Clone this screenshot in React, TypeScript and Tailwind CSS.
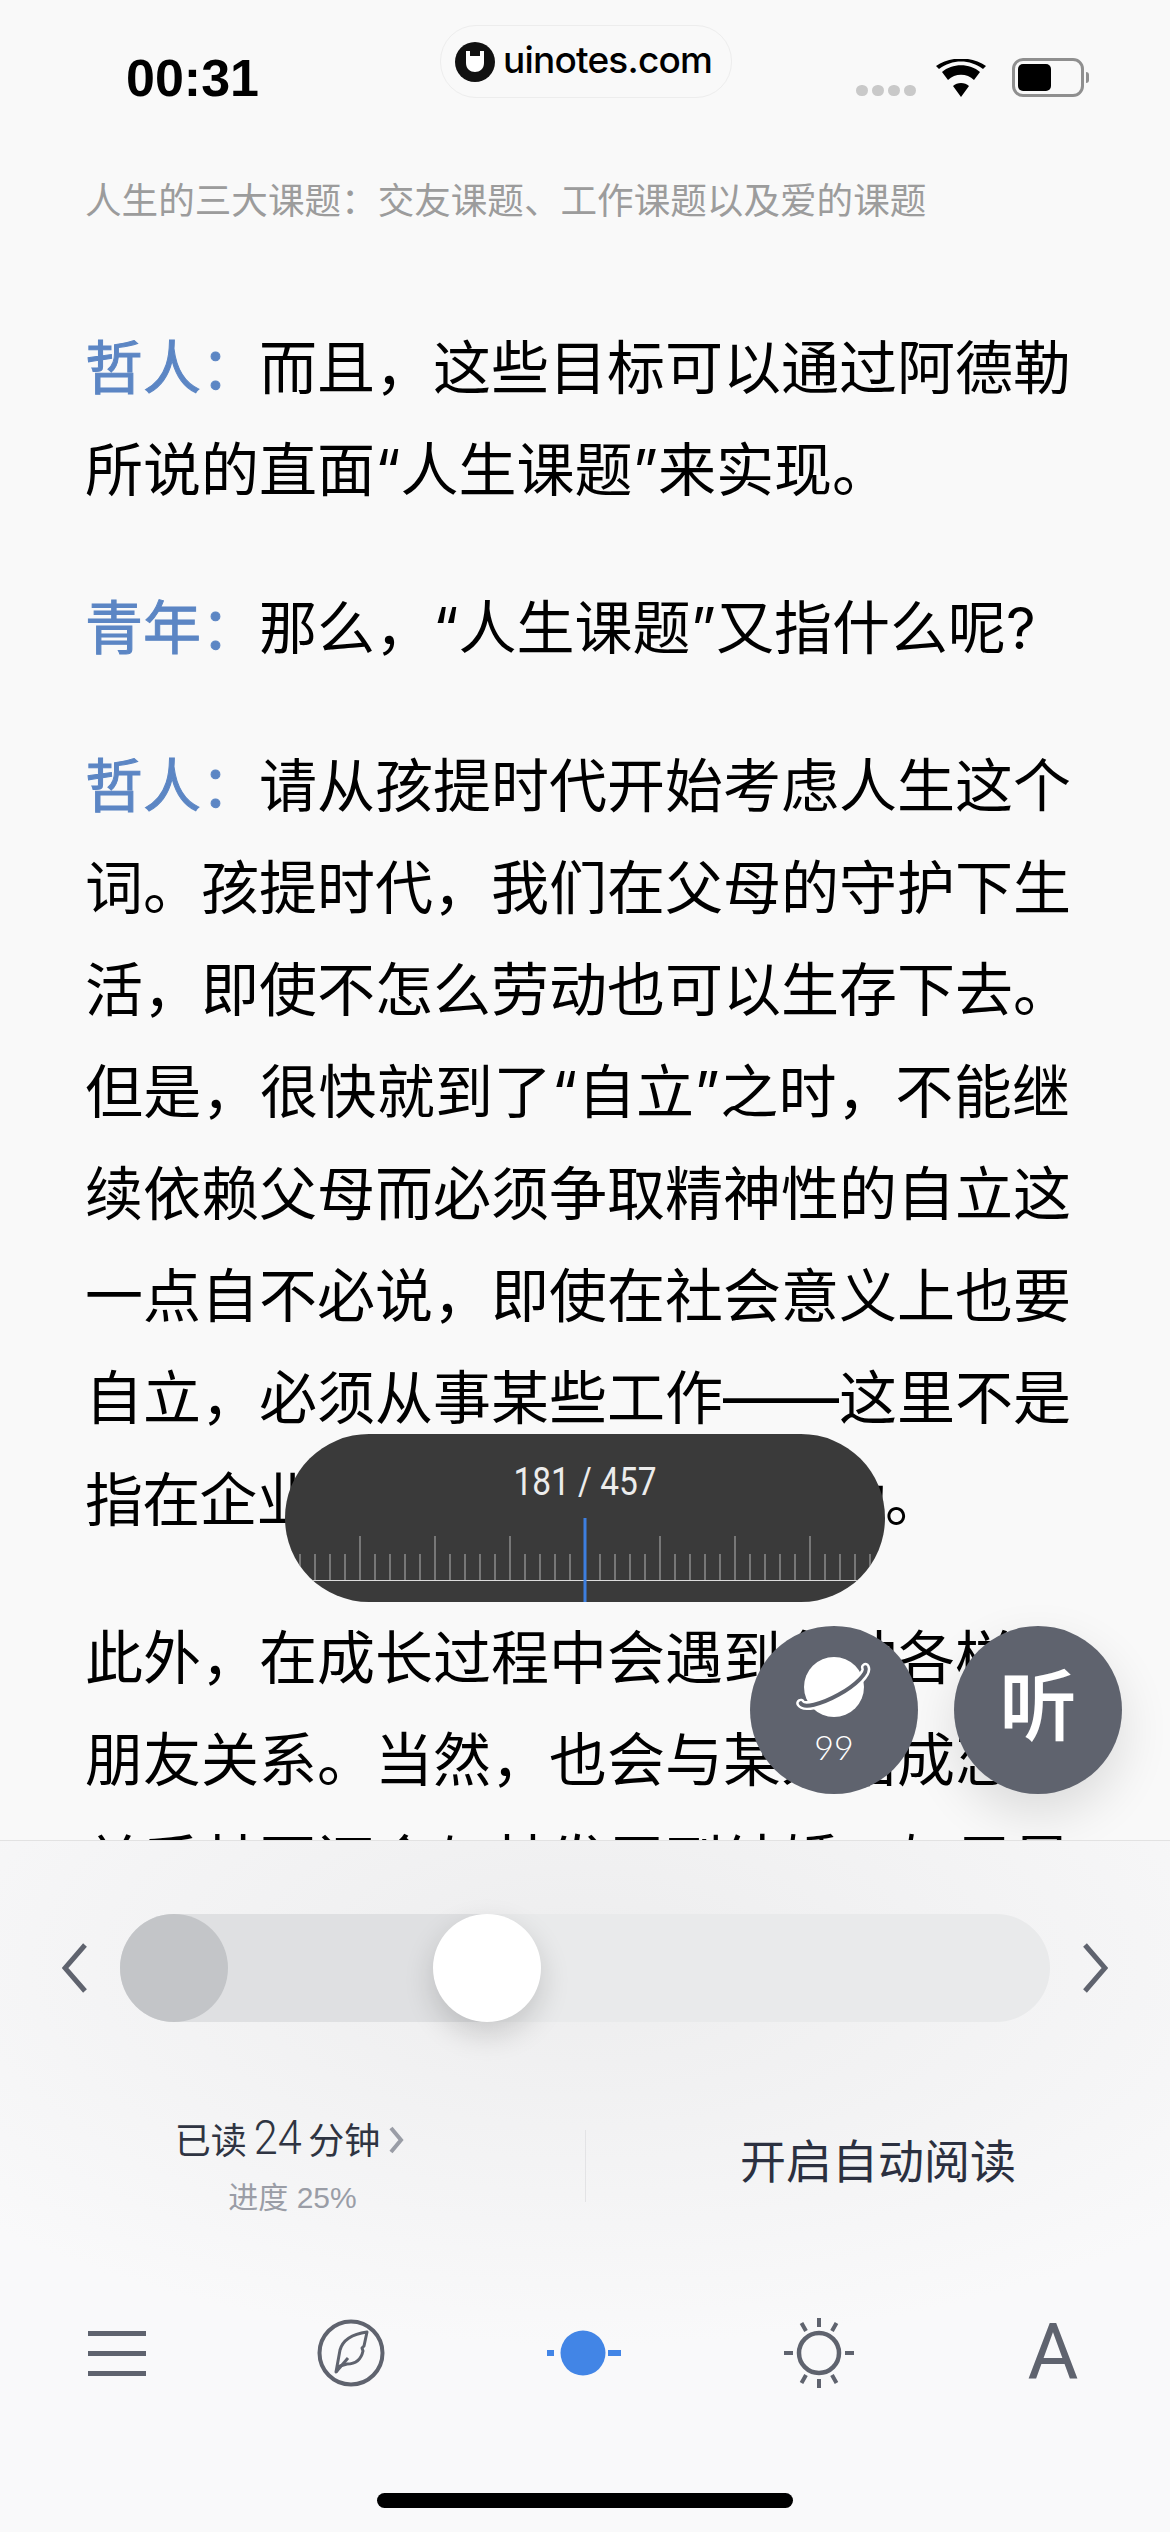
import React from "react";

const Line: React.FC<{ text: string; tag?: string; full?: boolean; tight?: boolean }> = ({ text, tag, full = true, tight }) => {
  return (
    <div
      className={
        (full ? "whitespace-nowrap text-justify [text-align-last:justify]" : "whitespace-nowrap") +
        (tight ? " tracking-[-0.85px]" : "")
      }
    >
      {tag && <span className="text-[#5c86c4] [-webkit-text-stroke:1px_#5c86c4]">{tag}</span>}
      {text}
    </div>
  );
};

const Ruler: React.FC = () => {
  const ticks = [];
  for (let k = -20; k <= 20; k++) {
    if (k === 0) continue;
    ticks.push(
      <rect key={k} x={300 + k * 15 - 0.5} y={k % 5 === 0 ? 102 : 120} width={1} height={k % 5 === 0 ? 44 : 26} fill="#b4b4b4" />
    );
  }
  return (
    <svg width="600" height="168" viewBox="0 0 600 168" className="absolute inset-0">
      {ticks}
      <rect x="0" y="146" width="600" height="1" fill="#dcdcdc" />
      <rect x="298.5" y="84" width="3" height="84" fill="#3d7fe0" />
    </svg>
  );
};

const PlanetIcon: React.FC = () => {
  return (
    <svg width="76" height="64" viewBox="0 0 76 64">
      <circle cx="38" cy="31" r="30" fill="#fff" />
      <g transform="rotate(-29 38 31)" fill="none" strokeLinecap="round">
        <path d="M1 29 A37 11 0 0 0 75 29" stroke="#fff" strokeWidth="9" />
        <path d="M1 29 A37 11 0 0 0 75 29" stroke="#5f636e" strokeWidth="4" />
      </g>
    </svg>
  );
};

const CompassIcon: React.FC = () => {
  return (
    <svg width="68" height="68" viewBox="0 0 68 68" fill="none" stroke="#5f636e">
      <circle cx="34" cy="34" r="31.5" strokeWidth="4" />
      <path d="M19 53 L23 31 C26 20 36 15 50 13 L47 27 L45 29 L46 32 C44 41 38 45 30 45 L23 47 Z" strokeWidth="3" strokeLinejoin="round" />
      <path d="M19 53 L31 39" strokeWidth="3" />
    </svg>
  );
};

const SunIcon: React.FC = () => {
  return (
    <svg width="72" height="72" viewBox="0 0 72 72" fill="none" stroke="#5f636e" strokeWidth="4">
      <circle cx="36" cy="36" r="20" strokeWidth="4.5" />
      <path d="M36 1 V10 M36 62 V71 M1 36 H10 M62 36 H71" />
      <path d="M18.5 6 L23 14 M53.5 6 L49 14 M18.5 66 L23 58 M53.5 66 L49 58" />
    </svg>
  );
};

const Chevron: React.FC<{ right?: boolean }> = ({ right }) => {
  return (
    <svg width="26" height="50" viewBox="0 0 26 50" fill="none" stroke="#5f636e" strokeWidth="5">
      <path d={right ? "M3 2 L23 25 L3 48" : "M23 2 L3 25 L23 48"} />
    </svg>
  );
};

const App: React.FC = () => {
  return (
    <div
      lang="zh-CN"
      className="relative flex flex-col h-[2532px] w-[1170px] overflow-hidden bg-[#f9f9f9] text-black font-['Liberation_Sans','Noto_Sans_CJK_SC',sans-serif]"
    >
      {/* status bar */}
      <div className="flex items-start justify-between h-[112px] shrink-0 pl-[126px] pr-[86px] pt-[49px]">
        <span className="text-[52px] leading-[58px] font-bold">00:31</span>
        <div className="flex items-center gap-[20px] pt-[9px]">
          <div className="flex gap-[4px] pt-[26px]">
            <i className="w-[12px] h-[11px] rounded-full bg-[#c9c9c9]" />
            <i className="w-[12px] h-[11px] rounded-full bg-[#c9c9c9]" />
            <i className="w-[12px] h-[11px] rounded-full bg-[#c9c9c9]" />
            <i className="w-[12px] h-[11px] rounded-full bg-[#c9c9c9]" />
          </div>
          <svg width="50" height="38" viewBox="0 0 50 38" className="mr-[6px]">
            <path d="M25 38 L17 27 C21 23 29 23 33 27 Z M12 21 L6 13 C16 4 34 4 44 13 L38 21 C31 14 19 14 12 21 Z M3 10 L0 7 C14 -3 36 -3 50 7 L47 10 C34 0 16 0 3 10 Z" fill="#000" />
          </svg>
          <div className="relative w-[72px] h-[39px] rounded-[11px] border-[3px] border-[#8f8f8f] p-[3px]">
            <div className="w-[33px] h-full rounded-[5px] bg-black" />
            <i className="absolute -right-[8px] top-[11px] w-[3px] h-[11px] rounded-r bg-[#8f8f8f]" />
          </div>
        </div>
      </div>

      {/* watermark */}
      <div className="absolute left-[440px] top-[25px] w-[292px] h-[73px] rounded-[36px] border border-[#ededed] flex items-center pl-[14px] gap-[8px]">
        <svg width="40" height="40" viewBox="0 0 40 40">
          <circle cx="20" cy="20" r="20" fill="#111" />
          <path d="M11 9 V21 C11 33 29 33 29 21 V9 H25 V14 H15 V9 Z" fill="#fff" />
        </svg>
        <span className="text-[37px] leading-none font-['Inter',sans-serif] font-medium tracking-[-0.8px] -mt-[4px]">uinotes.com</span>
      </div>

      {/* article */}
      <div className="flex-1 min-h-0 overflow-hidden pl-[85px] w-[1070px]">
        <div className="text-[36.6px] leading-[48px] text-[#9c9c9c] whitespace-nowrap mt-[66px]">
          人生的三大课题：交友课题、工作课题以及爱的课题
        </div>
        <div className="mt-[91px] text-[58px] leading-[102px] font-['Inter','Noto_Sans_CJK_SC',sans-serif]">
          <div className="mb-[56px]">
            <Line tag="哲人：" text="而且，这些目标可以通过阿德勒" />
            <Line full={false} text="所说的直面“人生课题”来实现。" />
          </div>
          <div className="mb-[56px]">
            <Line full={false} tag="青年：" text="那么，“人生课题”又指什么呢?" />
          </div>
          <div className="mb-[56px]">
            <Line tag="哲人：" text="请从孩提时代开始考虑人生这个" />
            <Line text="词。孩提时代，我们在父母的守护下生" />
            <Line text="活，即使不怎么劳动也可以生存下去。" />
            <Line text="但是，很快就到了“自立”之时，不能继" />
            <Line text="续依赖父母而必须争取精神性的自立这" />
            <Line text="一点自不必说，即使在社会意义上也要" />
            <Line text="自立，必须从事某些工作——这里不是" />
            <Line full={false} tight text="指在企业工作，而是广义的劳动。" />
          </div>
          <div>
            <Line text="此外，在成长过程中会遇到各种各样的" />
            <Line text="朋友关系。当然，也会与某人结成恋爱" />
            <Line text="关系甚至还会与其发展到结婚。如果是" />
          </div>
        </div>
      </div>

      {/* page bubble */}
      <div className="absolute left-[285px] top-[1434px] w-[600px] h-[168px] rounded-full bg-[#3a3a3a] overflow-hidden">
        <div className="relative text-center text-[#ececec] text-[38px] leading-[44px] pt-[26px] font-['Roboto',sans-serif] [transform:scaleX(0.88)]">
          181 / 457
        </div>
        <Ruler />
      </div>

      {/* floating buttons */}
      <div className="absolute left-[750px] top-[1626px] flex gap-[36px]">
        <div className="w-[168px] h-[168px] rounded-full bg-[#5f636e] flex flex-col items-center pt-[30px]">
          <PlanetIcon />
          <span className="text-white text-[34px] leading-[36px] mt-[9px] font-['Lato',sans-serif] font-light">99</span>
        </div>
        <div className="w-[168px] h-[168px] rounded-full bg-[#5f636e] flex items-center justify-center shadow-[0_20px_50px_rgba(0,0,0,0.12)]">
          <span className="text-white text-[76px] leading-none [-webkit-text-stroke:2px_#fff] -mt-[4px]">听</span>
        </div>
      </div>

      {/* bottom panel */}
      <div className="relative shrink-0 h-[692px] border-t border-[#e2e2e2] pt-[73px] bg-[radial-gradient(ellipse_70%_55%_at_50%_18%,#ededee_0%,#f4f4f5_60%,#f9f9fa_100%)]">
        <div className="flex items-center pl-[62px] gap-[32px]">
          <Chevron />
          <div className="relative w-[930px] h-[108px] rounded-full bg-[#e9eaeb]">
            <div className="absolute left-0 top-0 h-full w-[367px] rounded-l-full bg-[#dfe0e2]" />
            <div className="absolute left-0 top-0 w-[108px] h-[108px] rounded-full bg-[#c3c5c8]" />
            <div className="absolute left-[313px] top-0 w-[108px] h-[108px] rounded-full bg-white shadow-[0_12px_30px_rgba(0,0,0,0.16)]" />
          </div>
          <Chevron right />
        </div>

        <div className="mt-[108px] h-[72px] flex">
          <div className="w-[585px] flex flex-col items-center justify-center">
            <div className="flex items-baseline text-[36px] leading-[50px] text-[#2f3442] whitespace-nowrap -mt-[3px] -ml-[6px]">
              <span>已读</span>
              <span className="text-[48px] font-['Roboto',sans-serif] font-light mx-[4px] [transform:scaleX(0.9)]">24</span>
              <span>分钟</span>
              <svg width="16" height="28" viewBox="0 0 16 28" fill="none" stroke="#9a9da6" strokeWidth="4" className="ml-[8px] self-center">
                <path d="M3 2 L13 14 L3 26" />
              </svg>
            </div>
            <div className="text-[30px] leading-[38px] mt-[12px] text-[#9a9da6] whitespace-nowrap">进度 25%</div>
          </div>
          <div className="w-px h-[72px] bg-[#e3e3e5]" />
          <div className="flex-1 flex items-center justify-center pb-[8px] text-[46px] text-[#2b3040]">开启自动阅读</div>
        </div>

        <div className="mt-[115px] grid grid-cols-5 h-[70px] items-center justify-items-center">
          <div className="flex flex-col gap-[15px] w-[58px]">
            <i className="h-[5px] bg-[#5f636e]" />
            <i className="h-[5px] bg-[#5f636e]" />
            <i className="h-[5px] bg-[#5f636e]" />
          </div>
          <CompassIcon />
          <svg width="74" height="46" viewBox="0 0 74 46" className="-ml-[3px]">
            <circle cx="36" cy="23" r="22.5" fill="#4285e6" />
            <rect x="0" y="20" width="7" height="6" fill="#4285e6" />
            <rect x="61" y="20" width="13" height="6" fill="#4285e6" />
          </svg>
          <SunIcon />
          <span className="text-[78px] leading-[70px] text-[#5f636e] font-['Roboto',sans-serif]">A</span>
        </div>

        <div className="mt-[106px] mx-auto w-[416px] h-[15px] rounded-full bg-black" />
      </div>
    </div>
  );
};

export default App;
